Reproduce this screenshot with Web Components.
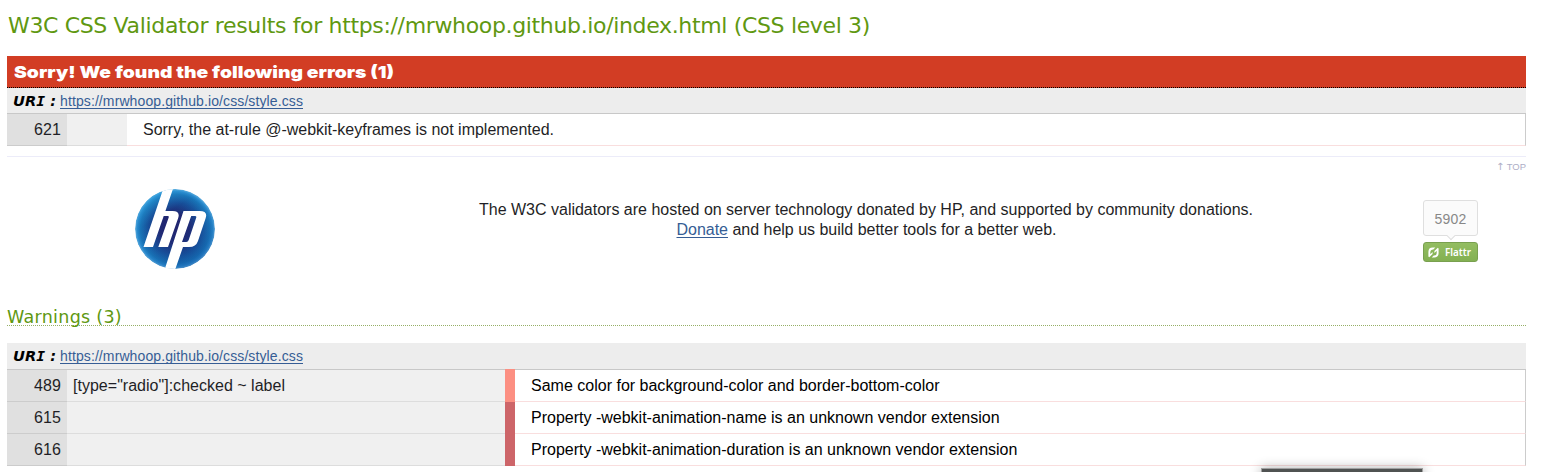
<!DOCTYPE html>
<html lang="en">
<head>
<meta charset="utf-8">
<title>W3C CSS Validator results</title>
<style>
html,body{margin:0;height:472px;overflow:hidden;background:#fff}
body{font-family:"Liberation Sans",Arial,sans-serif;font-size:16px;color:#1f1f26}
</style>
</head>
<body>
<validator-page></validator-page>
<script>
const define = (name, html, setup) => customElements.define(name, class extends HTMLElement {
  connectedCallback() {
    if (this.shadowRoot) return;
    const t = document.createElement('template');
    t.innerHTML = html;
    this.attachShadow({mode: 'open'}).append(t.content.cloneNode(true));
    if (setup) setup.call(this);
  }
});

// A single line of text fitted to an exact measure, by tracking or (stretch) by widening the glyphs.
define('fit-text', `<style>:host{display:inline-block;white-space:pre}span{display:inline-block;transform-origin:0 50%}:host([link]) span{text-decoration:underline;text-decoration-thickness:1px;text-underline-offset:2px;text-decoration-skip-ink:none}</style><span><slot></slot></span>`, function () {
  const s = this.shadowRoot.querySelector('span'), w = +this.getAttribute('measure');
  const natural = s.getBoundingClientRect().width;
  if (this.hasAttribute('stretch')) {
    this.style.width = w + 'px';
    s.style.transform = `scaleX(${w / natural})`;
  } else {
    s.style.letterSpacing = (w - natural) / this.textContent.length + 'px';
  }
});

define('result-heading', `<style>
:host{display:block;box-sizing:border-box;font:22px/28px "DejaVu Sans",Verdana,sans-serif;color:#609811;height:56px;padding:12px 0 0 1px}
:host([sub]){font-size:17.5px;line-height:21px;border-bottom:1px dotted #96af66;height:19px;padding:0}
</style><slot></slot>`);

define('error-banner', `<style>
:host{display:block;box-sizing:border-box;height:32px;padding-left:7px;background:#d23d24;border-bottom:1px dotted #000;color:#fff;font:900 16.5px/32px Inter,sans-serif}
</style><slot></slot>`);

define('uri-row', `<style>
:host{display:flex;box-sizing:border-box;padding-left:6px;background:#ededed;line-height:26px;height:var(--uri-height,26px);font-size:14px}
b{width:47px;font:italic bold 13.5px/26px "DejaVu Sans",Verdana,sans-serif;color:#000}
i{font-family:"DejaVu Sans Mono",monospace}
a{color:#365d95}
</style><b><fit-text stretch measure="43">UR<i>I</i> :</fit-text></b><a><fit-text link measure="243">https://mrwhoop.github.io/css/style.css</fit-text></a>`);

define('report-row', `<style>
:host{display:grid;grid-template-columns:60px var(--ctx,60px) 1fr;height:32px;line-height:31px}
.n,.c,.m{box-sizing:border-box;height:32px}
.n{background:#e0e0e0;border-bottom:1px solid #ccc;text-align:right;padding-right:6px}
.c{background:#f0f0f0;border-bottom:1px solid #ddd;padding-left:6px}
.m{display:flex}
.bar{width:0;background:#cd6569}
.text{flex:1;box-sizing:border-box;border-bottom:1px solid #f9dede;border-right:1px solid #ccc;padding-left:16px}
:host([level]) .bar{width:10px}
:host([level]) .text{color:#000}
:host([level="2"]) .bar{background:#fc8f82;margin-top:-1px}
</style><div class="n"><slot name="line"></slot></div><div class="c"><slot name="context"></slot></div><div class="m"><div class="bar"></div><div class="text"><slot></slot></div></div>`);

define('report-table', `<style>:host{display:block}section{border-top:1px solid #c8c8c8}</style><uri-row></uri-row><section><slot></slot></section>`);

define('hp-logo', `<style>:host{display:block;width:80px;height:80px}svg{display:block}</style>
<svg width="80" height="80" viewBox="0 0 80 80"><defs>
<radialGradient id="g" cx=".5" cy=".5" r=".51"><stop offset="0" stop-color="#211d68"/><stop offset=".36" stop-color="#20246f"/><stop offset=".65" stop-color="#174e98"/><stop offset=".85" stop-color="#1873b6"/><stop offset=".92" stop-color="#2789cd"/><stop offset=".97" stop-color="#58a9dc"/><stop offset="1" stop-color="#2878b8"/></radialGradient>
<linearGradient id="l" x1=".1" y1="0" x2=".7" y2="1"><stop offset="0" stop-color="#37b9ef" stop-opacity=".6"/><stop offset=".35" stop-color="#2a8dd0" stop-opacity="0"/><stop offset="1" stop-color="#082f85" stop-opacity=".3"/></linearGradient>
<clipPath id="c"><circle cx="40" cy="40" r="40"/></clipPath></defs>
<g clip-path="url(#c)"><circle cx="40" cy="40" r="40" fill="url(#g)"/><circle cx="40" cy="40" r="40" fill="url(#l)"/>
<path d="M28.5-1H38.3L30.4 22H37.5Q45.5 22 43.2 29L33 58H23.3L33.7 28.5Q34.2 27 32.8 27H28.7L18 58H8.5Z" fill="#fff"/>
<path d="M48.5 22H64.5Q73 22 70.7 29L63 52Q61 58 54 58H48L40 81H29.5ZM56.2 27L47 53H51.3Q53 53 53.7 51L61.2 28.8Q61.8 27 60 27Z" fill="#fff" fill-rule="evenodd"/></g></svg>`);

define('flattr-button', `<style>
:host{display:block;width:55px;height:62px;color:#888;font-size:14px}
.count{box-sizing:border-box;height:36px;border:1px solid #dfdfdf;border-radius:3px;background:#fbfbfb;text-align:center;line-height:36px;position:relative}
.count::after{content:"";position:absolute;left:24px;bottom:-4px;width:6px;height:6px;background:#fbfbfb;border:solid #dfdfdf;border-width:0 1px 1px 0;transform:rotate(45deg);box-sizing:border-box}
.btn{box-sizing:border-box;display:flex;align-items:center;height:20px;margin-top:6px;padding-left:4px;border:1px solid #79a04f;border-radius:3px;background:linear-gradient(#93bd61,#83b052);color:#fff;font:600 11.5px/18px "Noto Sans","Open Sans",sans-serif}
svg{margin-right:6px}
</style><div class="count"><fit-text measure="32">5902</fit-text></div>
<div class="btn"><svg width="11" height="11" viewBox="0 0 11 11"><path d="M.4 9.5V5Q.4.6 4.8.6H7.3L5.3 2.4Q2.3 2.4 2.3 5.3V7.3L4.6 5V7L1.2 10.3Z" fill="#fff"/><path d="M10.6 1.5V6Q10.6 10.4 6.2 10.4H3.7L5.7 8.6Q8.7 8.6 8.7 5.7V3.7L6.4 6V4L9.8.7Z" fill="#fff"/></svg><fit-text stretch measure="26">Flattr</fit-text></div>`);

define('donate-block', `<style>
:host{display:grid;grid-template-columns:472px 774px 1fr;height:150px}
hp-logo{margin:32px 0 0 128px}
p{margin:43px 0 0;text-align:center;line-height:20px}
p .second{padding-left:1px}
a{color:#365d95}
.end{display:flex;flex-direction:column;align-items:flex-end}
.top{font-size:9.5px;line-height:12px;margin-top:4px;color:#aeaec6}
.top i{font:10px/12px "DejaVu Sans",sans-serif}
flattr-button{margin:27px 48px 0 0}
</style><hp-logo></hp-logo>
<p><fit-text measure="774">The W3C validators are hosted on server technology donated by HP, and supported by community donations.</fit-text><br><a class="second"><fit-text link measure="51.5">Donate</fit-text></a><fit-text measure="328.5"> and help us build better tools for a better web.</fit-text></p>
<div class="end"><div class="top"><fit-text stretch measure="30"><i>↑</i> TOP</fit-text></div><flattr-button></flattr-button></div>`);

define('window-edge', `<style>:host{position:absolute;left:1261px;top:468px;width:162px;height:20px;box-sizing:border-box;background:#505352;border:1px solid #a0a0a0;box-shadow:0 0 12px rgba(0,0,0,.3)}</style>`);

define('validator-page', `<style>
:host{display:block;position:relative;width:1519px;height:472px;padding-left:7px}
hr{border:0;height:1px;margin:10px 0 0;background:#ececf9}
.warn{margin-bottom:17px}
.errors{--uri-height:25px}
.warnings{--ctx:438px}
</style>
<result-heading><fit-text measure="862">W3C CSS Validator results for https://mrwhoop.github.io/index.html (CSS level 3)</fit-text></result-heading>
<error-banner><fit-text stretch measure="380">Sorry! We found the following errors (1)</fit-text></error-banner>
<report-table class="errors"><report-row><fit-text slot="line" measure="27">621</fit-text><fit-text measure="411">Sorry, the at-rule @-webkit-keyframes is not implemented.</fit-text></report-row></report-table>
<hr>
<donate-block></donate-block>
<result-heading sub class="warn"><fit-text measure="115">Warnings (3)</fit-text></result-heading>
<report-table class="warnings">
<report-row level="2"><fit-text slot="line" measure="27">489</fit-text><fit-text slot="context" measure="212">[type="radio"]:checked ~ label</fit-text><fit-text measure="408.5">Same color for background-color and border-bottom-color</fit-text></report-row>
<report-row level="1"><fit-text slot="line" measure="27">615</fit-text><fit-text measure="468.6">Property -webkit-animation-name is an unknown vendor extension</fit-text></report-row>
<report-row level="1"><fit-text slot="line" measure="27">616</fit-text><fit-text measure="486.4">Property -webkit-animation-duration is an unknown vendor extension</fit-text></report-row>
</report-table>
<window-edge></window-edge>`);
</script>
</body>
</html>
